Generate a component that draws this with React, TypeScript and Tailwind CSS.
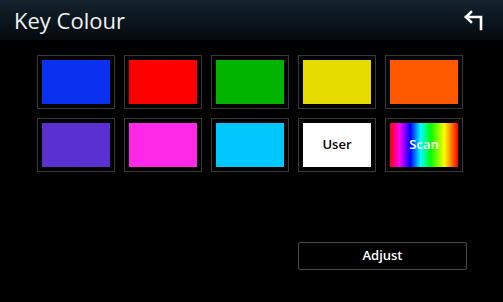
const colours = [
  '#0a30f0',
  '#ff0000',
  '#00b400',
  '#e6dc00',
  '#ff5a00',
  '#5a30d0',
  '#ff28e6',
  '#00c8ff',
];

function Tile({ children }: { children: React.ReactNode }) {
  return (
    <div className="w-[78px] h-[54px] border border-[#3a3a3a] p-[4px] bg-black">
      {children}
    </div>
  );
}

export default function App() {
  return (
    <div
      className="w-[503px] h-[302px] bg-black text-white overflow-hidden"
      style={{ fontFamily: '"Open Sans", "Noto Sans", sans-serif' }}
    >
      {/* Header */}
      <div className="h-[40px] flex items-center justify-between pl-[14px] pr-[18px] bg-gradient-to-b from-[#14232e] to-[#050a0e]">
        <h1 className="text-[22px] font-medium text-[#f2f2f2]">Key Colour</h1>
        <svg width="22" height="22" viewBox="0 0 22 22" fill="none" stroke="white" strokeWidth="2.6" strokeLinecap="square" strokeLinejoin="miter">
          <polyline points="8,3 3,8 8,13" />
          <polyline points="3,8 18,8 18,20" />
        </svg>
      </div>

      {/* Colour grid */}
      <div className="pl-[37px] pt-[15px] grid grid-cols-[repeat(5,78px)] gap-x-[9px] gap-y-[9px]">
        {colours.map((c) => (
          <Tile key={c}>
            <div className="w-full h-full" style={{ backgroundColor: c }} />
          </Tile>
        ))}
        <Tile>
          <div className="w-full h-full bg-white flex items-center justify-center text-black text-[13px] font-semibold">
            User
          </div>
        </Tile>
        <Tile>
          <div className="w-full h-full bg-[linear-gradient(to_right,#ff0000,#ff00ff_14%,#8000ff_22%,#0000ff_30%,#00ffff_45%,#00ff00_60%,#ffff00_80%,#ff8000_90%,#ff0000)] flex items-center justify-center text-white text-[13px] font-semibold">
            Scan
          </div>
        </Tile>
      </div>

      {/* Adjust */}
      <div className="flex justify-end pr-[36px] pt-[70px]">
        <button className="w-[169px] h-[28px] border border-[#4a4a4a] rounded-[2px] text-[13px] font-semibold text-white">
          Adjust
        </button>
      </div>
    </div>
  );
}
